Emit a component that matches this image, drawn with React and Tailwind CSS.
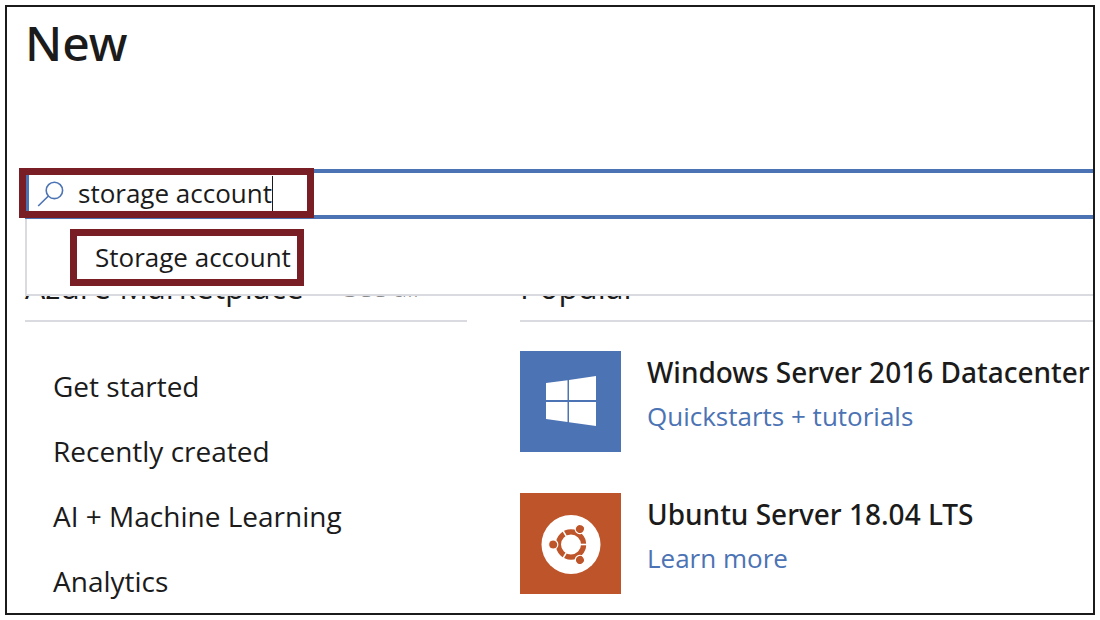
import React, { useState } from "react";

const categories = ["Get started", "Recently created", "AI + Machine Learning", "Analytics"];

function SearchIcon() {
  return (
    <svg width="28" height="28" viewBox="0 0 28 28" fill="none" stroke="#4c73b4" strokeWidth="1.6" aria-hidden="true">
      <circle cx="17.4" cy="10.4" r="8.2" />
      <path d="M11.4 16 L1.2 26" />
    </svg>
  );
}

function WindowsTile() {
  return (
    <svg width="101" height="101" viewBox="0 0 101 101" className="shrink-0" aria-hidden="true">
      <rect width="101" height="101" fill="#4c73b4" />
      <g fill="#fff">
        <path d="M26 32 L47.5 29.3 V49 H26 Z" />
        <path d="M49 29 L76 25 V49 H49 Z" />
        <path d="M26 51 H47.5 V71 L26 68 Z" />
        <path d="M49 51 H76 V75 L49 71.3 Z" />
      </g>
    </svg>
  );
}

function UbuntuTile() {
  return (
    <svg width="101" height="101" viewBox="0 0 101 101" className="shrink-0" aria-hidden="true">
      <rect width="101" height="101" fill="#be552a" />
      <circle cx="51" cy="51.5" r="29.5" fill="#fff" />
      <g transform="translate(51 51.5)">
        <circle r="12.6" fill="none" stroke="#be552a" strokeWidth="5.2" />
        <g stroke="#fff" strokeWidth="1.6">
          <path d="M9 0 H17" />
          <path d="M9 0 H17" transform="rotate(120)" />
          <path d="M9 0 H17" transform="rotate(240)" />
        </g>
        <g fill="#be552a" stroke="#fff" strokeWidth="1.2">
          <circle cx="-17.8" r="4.6" />
          <circle cx="-17.8" r="4.6" transform="rotate(120)" />
          <circle cx="-17.8" r="4.6" transform="rotate(240)" />
        </g>
      </g>
    </svg>
  );
}

function Product({ tile, title, link }) {
  return (
    <li className="flex gap-[26px]">
      {tile}
      <div className="whitespace-nowrap">
        <h3 className="font-['Noto_Sans','Open_Sans',sans-serif] text-[28px] leading-[42px] font-medium">{title}</h3>
        <a href="#" className="block text-[26px] leading-[46px] text-[#4c73b4]">
          {link}
        </a>
      </div>
    </li>
  );
}

export default function App() {
  const [query, setQuery] = useState("storage account");
  return (
    <div className="bg-white p-[5px] font-['Open_Sans','Noto_Sans',sans-serif] text-[#1b1b1b]">
      <main className="overflow-hidden border-2 border-[#1b1b1b] pl-[18px]">
        <h1 className="pt-1 font-['Noto_Sans','Open_Sans',sans-serif] text-[48px] leading-[64px] font-medium">New</h1>

        <div className="relative mt-[94px]">
          <div className="flex h-[50px] items-center border-y-4 border-l-4 border-[#4c73b4] pl-2">
            <SearchIcon />
            <input
              type="text"
              aria-label="Search the Marketplace"
              value={query}
              onChange={(e) => setQuery(e.target.value)}
              className="ml-[13px] field-sizing-content h-9 pb-0.5 text-[26px] leading-[34px] outline-none"
            />
            <span className="h-9 w-px bg-[#1b1b1b]" />
          </div>
          <div className="pointer-events-none absolute -top-px -left-1.5 h-[50px] w-[295px] border-7 border-[#7a1e26]" />
          <ul className="absolute top-[50px] right-0 left-0 z-10 border-b-2 border-l-2 border-[#d9dbe0] bg-white pt-[10px] pb-2 pl-[43px]">
            <li>
              <button type="button" className="border-7 border-[#7a1e26] py-1 pr-1.5 pl-[18px] text-[26px] leading-[35px]">
                Storage account
              </button>
            </li>
          </ul>
        </div>

        <div className="flex gap-[53px] pt-[52px]">
          <section className="w-[442px] shrink-0">
            <div className="flex items-center gap-10 border-b-2 border-[#d9dbe0] pb-[17px]">
              <h2 className="text-[32px] leading-8">Azure Marketplace</h2>
              <a href="#" className="text-[26px] leading-8 font-light text-[#8a8a8a]">
                See all
              </a>
            </div>
            <ul className="pt-[31px] pl-[28px] text-[28px] leading-[66px]">
              {categories.map((name) => (
                <li key={name} className="h-[65px]">
                  <a href="#">{name}</a>
                </li>
              ))}
            </ul>
          </section>
          <section className="min-w-0 grow">
            <h2 className="border-b-2 border-[#d9dbe0] pb-[17px] text-[32px] leading-8">Popular</h2>
            <ul className="flex flex-col gap-[41px] pt-[29px]">
              <Product tile={<WindowsTile />} title="Windows Server 2016 Datacenter" link="Quickstarts + tutorials" />
              <Product tile={<UbuntuTile />} title="Ubuntu Server 18.04 LTS" link="Learn more" />
            </ul>
          </section>
        </div>
      </main>
    </div>
  );
}
